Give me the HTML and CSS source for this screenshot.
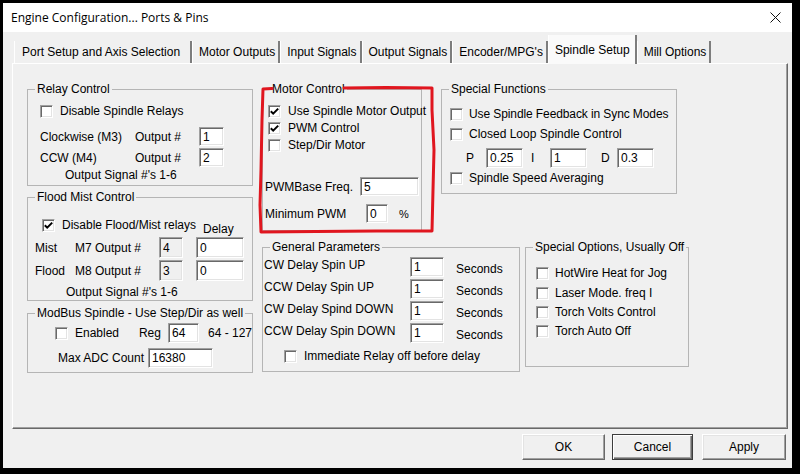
FILE: index.html
```html
<!DOCTYPE html>
<html>
<head>
<meta charset="utf-8">
<title>Engine Configuration</title>
<link rel="stylesheet" href="styles.css">
</head>
<body>
<div class="window">
  <div class="titlebar">
    <span class="title">Engine Configuration... Ports &amp; Pins</span>
    <svg class="close" width="11" height="11" viewBox="0 0 11 11"><path d="M0.5 0.5 L10.5 10.5 M10.5 0.5 L0.5 10.5" stroke="#111" stroke-width="1"/></svg>
  </div>
  <div class="tabs">
    <div class="tab first">Port Setup and Axis Selection</div>
    <div class="tab">Motor Outputs</div>
    <div class="tab">Input Signals</div>
    <div class="tab">Output Signals</div>
    <div class="tab">Encoder/MPG's</div>
    <div class="tab active">Spindle Setup</div>
    <div class="tab">Mill Options</div>
  </div>
  <div class="panel">
    <div class="col-left">
      <fieldset class="gb relay">
        <legend>Relay Control</legend>
        <div class="chk relay-cb"><span class="cb"></span><span>Disable Spindle Relays</span></div>
        <div class="frow relay-row first-out"><span class="lbl w95">Clockwise (M3)</span><span class="lbl w64">Output #</span><span class="edit w25">1</span></div>
        <div class="frow relay-row second-out"><span class="lbl w95">CCW (M4)</span><span class="lbl w64">Output #</span><span class="edit w25">2</span></div>
        <div class="note relay-note">Output Signal #'s 1-6</div>
      </fieldset>
      <fieldset class="gb flood">
        <legend>Flood Mist Control</legend>
        <div class="flood-top">
          <div class="chk flood-cb"><span class="cb"><svg viewBox="0 0 11 11" width="11" height="11"><path d="M1.8 5.2 L4.2 7.6 L9.2 2.6" fill="none" stroke="#000" stroke-width="2"/></svg></span><span>Disable Flood/Mist relays</span></div>
          <span class="delay">Delay</span>
        </div>
        <div class="frow flood-row mist"><span class="lbl w40">Mist</span><span class="lbl w84">M7 Output #</span><span class="edit dis w24 h21">4</span><span class="edit w48 h21 gap13">0</span></div>
        <div class="frow flood-row floodr"><span class="lbl w40">Flood</span><span class="lbl w84">M8 Output #</span><span class="edit dis w24 h21">3</span><span class="edit w48 h21 gap13">0</span></div>
        <div class="note flood-note">Output Signal #'s 1-6</div>
      </fieldset>
      <fieldset class="gb modbus">
        <legend>ModBus Spindle - Use Step/Dir as well</legend>
        <div class="frow modbus-row1"><div class="chk w86"><span class="cb"></span><span>Enabled</span></div><span class="lbl w29">Reg</span><span class="edit w31 h20">64</span><span class="lbl range">64 - 127</span></div>
        <div class="frow modbus-row2"><span class="lbl w90">Max ADC Count</span><span class="edit w65 h20">16380</span></div>
      </fieldset>
    </div>
    <div class="col-right">
      <div class="row-top">
        <div class="motor-wrap">
          <fieldset class="gb motor">
            <legend>Motor Control</legend>
            <div class="chk motor-cb first"><span class="cb"><svg viewBox="0 0 11 11" width="11" height="11"><path d="M1.8 5.2 L4.2 7.6 L9.2 2.6" fill="none" stroke="#000" stroke-width="2"/></svg></span><span>Use Spindle Motor Output</span></div>
            <div class="chk motor-cb"><span class="cb"><svg viewBox="0 0 11 11" width="11" height="11"><path d="M1.8 5.2 L4.2 7.6 L9.2 2.6" fill="none" stroke="#000" stroke-width="2"/></svg></span><span>PWM Control</span></div>
            <div class="chk motor-cb"><span class="cb"></span><span>Step/Dir Motor</span></div>
            <div class="frow pwm-row"><span class="lbl w95">PWMBase Freq.</span><span class="edit w59">5</span></div>
            <div class="frow minpwm-row"><span class="lbl w101">Minimum PWM</span><span class="edit w22">0</span><span class="lbl pct">%</span></div>
          </fieldset>
          <svg class="annot" width="184" height="158" viewBox="0 0 184 158"><path d="M16 8.5 L7 9 L6 40 L5 90 L4 125 L5 152 L60 151.5 L120 151 L176 151 L177 110 L178 70 L176 30 L176 8 L130 7.5 L88 8" fill="none" stroke="#e0161f" stroke-width="3" stroke-linejoin="round" stroke-linecap="round"/></svg>
        </div>
        <fieldset class="gb special">
          <legend>Special Functions</legend>
          <div class="chk sf-cb first"><span class="cb"></span><span>Use Spindle Feedback in Sync Modes</span></div>
          <div class="chk sf-cb second"><span class="cb"></span><span>Closed Loop Spindle Control</span></div>
          <div class="frow pid-row"><span class="lbl w20">P</span><span class="edit w37 h20">0.25</span><span class="lbl w19 ml8">I</span><span class="edit w37 h20">1</span><span class="lbl w16 ml14">D</span><span class="edit w37 h20">0.3</span></div>
          <div class="chk sf-cb third"><span class="cb"></span><span>Spindle Speed Averaging</span></div>
        </fieldset>
      </div>
      <div class="row-bottom">
        <fieldset class="gb general">
          <legend>General Parameters</legend>
          <div class="frow gp-row first"><span class="lbl gp-lbl">CW Delay Spin UP</span><span class="edit w34 h20">1</span><span class="lbl secs">Seconds</span></div>
          <div class="frow gp-row"><span class="lbl gp-lbl">CCW Delay Spin UP</span><span class="edit w34 h20">1</span><span class="lbl secs">Seconds</span></div>
          <div class="frow gp-row"><span class="lbl gp-lbl">CW Delay Spind DOWN</span><span class="edit w34 h20">1</span><span class="lbl secs">Seconds</span></div>
          <div class="frow gp-row"><span class="lbl gp-lbl">CCW Delay Spin DOWN</span><span class="edit w34 h20">1</span><span class="lbl secs">Seconds</span></div>
          <div class="chk gp-cb"><span class="cb"></span><span>Immediate Relay off before delay</span></div>
        </fieldset>
        <fieldset class="gb options">
          <legend>Special Options, Usually Off</legend>
          <div class="chk so-cb o1"><span class="cb"></span><span>HotWire Heat for Jog</span></div>
          <div class="chk so-cb o2"><span class="cb"></span><span>Laser Mode. freq I</span></div>
          <div class="chk so-cb o3"><span class="cb"></span><span>Torch Volts Control</span></div>
          <div class="chk so-cb o4"><span class="cb"></span><span>Torch Auto Off</span></div>
        </fieldset>
      </div>
    </div>
  </div>
  <div class="buttons">
    <div class="btn ok">OK</div>
    <div class="btn cancel">Cancel</div>
    <div class="btn apply">Apply</div>
  </div>
</div>
</body>
</html>
```
FILE: styles.css
```css
* { box-sizing: border-box; }
html, body { margin: 0; padding: 0; }
body {
  background: #000;
  width: 800px;
  height: 474px;
  overflow: hidden;
  font-family: "Liberation Sans", Arial, sans-serif;
  font-size: 12px;
  color: #000;
}
.window {
  margin: 3px 8px 0 3px;
  width: 789px;
  height: 465px;
  background: #f0f0f0;
  display: flex;
  flex-direction: column;
}
.titlebar {
  height: 29px;
  flex: none;
  background: #fff;
  display: flex;
  align-items: center;
  justify-content: space-between;
  padding: 0 11px 0 8px;
}
.title { font-family: "Open Sans", sans-serif; font-size: 12px; }
.close { display: block; }

/* tabs */
.tabs {
  height: 31px;
  flex: none;
  display: flex;
  align-items: flex-end;
  padding-left: 11px;
  position: relative;
  z-index: 1;
}
.tab {
  height: 22px;
  line-height: 22px;
  padding: 0 3px 0 6px;
  border-left: 1px solid #fff;
  border-right: 2px solid #7d7d7d;
  white-space: nowrap;
}
.tab.first { padding: 0 10px 0 7px; }
.tab.active {
  height: 29px;
  margin-bottom: -1px;
  line-height: 20px;
  padding: 5px 5px 0 6px;
  background: #fafafa;
}

/* panel */
.panel {
  flex: none;
  margin-left: 9px;
  width: 776px;
  height: 366px;
  border: 1px solid;
  border-color: #fff #696969 #696969 #fff;
  box-shadow: inset -1px -1px 0 #a0a0a0;
  display: flex;
  gap: 9px;
  padding: 18px 0 0 14px;
}
.col-left { width: 226px; display: flex; flex-direction: column; }
.col-right { display: flex; flex-direction: column; }
.row-top { display: flex; align-items: flex-start; gap: 19px; }
.row-bottom { display: flex; align-items: flex-start; gap: 5px; margin-top: 9px; }

/* group boxes */
.gb {
  margin: 0;
  padding: 0;
  min-width: 0;
  border: 1px solid #b5b5b5;
  display: block;
}
.gb legend {
  margin-left: 7px;
  padding: 0 2px;
  line-height: 14px;
  height: 14px;
  white-space: nowrap;
}
.relay { height: 104px; }
.flood { height: 111px; margin-top: 4px; }
.modbus { height: 67px; margin-top: 5px; }
.motor { width: 160px; height: 149px; }
.special { width: 236px; height: 112px; }
.general { width: 258px; height: 132px; }
.options { width: 164px; height: 127px; }

/* controls */
.chk {
  display: flex;
  align-items: center;
  gap: 7px;
  height: 14px;
  white-space: nowrap;
}
.cb {
  flex: none;
  width: 13px;
  height: 13px;
  background: #fff;
  border: 1px solid;
  border-color: #a0a0a0 #fff #fff #a0a0a0;
  box-shadow: inset 1px 1px 0 #696969, inset -1px -1px 0 #e3e3e3;
}
.cb svg { display: block; }
.frow { display: flex; align-items: center; white-space: nowrap; }
.lbl { flex: none; line-height: 14px; }
.edit {
  flex: none;
  display: block;
  height: 19px;
  background: #fff;
  border: 1px solid;
  border-color: #a0a0a0 #fff #fff #a0a0a0;
  box-shadow: inset 1px 1px 0 #696969, inset -1px -1px 0 #e3e3e3;
  padding-left: 3px;
  line-height: 18px;
  white-space: nowrap;
  overflow: hidden;
}
.edit.dis { background: #f0f0f0; }
.h20 { height: 20px; }
.h21 { height: 21px; line-height: 20px; }
.w16 { width: 16px; } .w19 { width: 19px; } .w20 { width: 20px; }
.w22 { width: 22px; } .w24 { width: 24px; } .w25 { width: 25px; }
.w29 { width: 29px; } .w31 { width: 31px; } .w34 { width: 34px; }
.w37 { width: 37px; } .w40 { width: 40px; } .w48 { width: 48px; }
.w59 { width: 59px; } .w64 { width: 64px; } .w65 { width: 65px; }
.w84 { width: 84px; } .w86 { width: 86px; } .w90 { width: 90px; }
.w95 { width: 95px; } .w101 { width: 101px; }
.ml8 { margin-left: 8px; } .ml14 { margin-left: 14px; }
.gap13 { margin-left: 13px; }
.note { line-height: 14px; }

/* relay */
.relay-cb { margin: 8px 0 0 12px; }
.relay-row { height: 19px; padding-left: 12px; }
.first-out { margin-top: 9px; }
.second-out { margin-top: 2px; }
.relay-note { margin-top: 1px; padding-left: 37px; }

/* flood */
.flood-top { display: flex; align-items: flex-start; height: 20px; margin-top: 13px; padding-left: 14px; }
.flood-cb { width: 161px; margin-top: 1px; }
.delay { margin-top: 5px; line-height: 14px; }
.flood-row { height: 21px; padding-left: 7px; }
.floodr { margin-top: 2px; }
.flood-note { margin-top: 4px; padding-left: 38px; }

/* modbus */
.modbus-row1 { height: 20px; margin-top: 3px; padding-left: 27px; }
.range { margin-left: 9px; }
.modbus-row2 { height: 20px; margin-top: 5px; padding-left: 30px; }

/* motor */
.motor-wrap { position: relative; width: 160px; }
.annot { position: absolute; left: -6px; top: -2px; pointer-events: none; }
.motor-cb { margin: 3px 0 0 5px; }
.motor-cb.first { margin-top: 8px; }
.pwm-row { height: 19px; margin-top: 25px; padding-left: 2px; }
.minpwm-row { height: 19px; margin-top: 8px; padding-left: 2px; }
.pct { margin-left: 11px; font-size: 11px; }

/* special functions */
.sf-cb { margin-left: 8px; gap: 6px; }
.sf-cb.first { margin-top: 11px; letter-spacing: -0.1px; }
.sf-cb.second { margin-top: 6px; }
.sf-cb.third { margin-top: 3px; }
.pid-row { height: 20px; margin-top: 7px; padding-left: 24px; }

/* general */
.gp-row { height: 20px; margin-top: 2px; padding-left: 1px; }
.gp-row.first { margin-top: 3px; }
.gp-lbl { width: 146px; align-self: flex-start; margin-top: 1px; }
.secs { margin-left: 12px; margin-top: 3px; }
.gp-cb { margin: 6px 0 0 21px; }

/* special options */
.so-cb { margin-left: 10px; gap: 6px; }
.o1 { margin-top: 12px; }
.o2 { margin-top: 6px; }
.o3 { margin-top: 5px; }
.o4 { margin-top: 5px; }

/* buttons */
.buttons {
  flex: 1;
  display: flex;
  justify-content: flex-end;
  align-items: flex-start;
  padding: 5px 6px 0 0;
}
.btn {
  height: 26px;
  line-height: 24px;
  text-align: center;
  background: #f0f0f0;
  border: 1px solid;
  border-color: #fff #696969 #696969 #fff;
  box-shadow: inset -1px -1px 0 #a0a0a0, inset 1px 1px 0 #e3e3e3;
}
.ok { width: 83px; }
.cancel {
  width: 81px;
  margin-left: 7px;
  border-color: #3c3c3c;
  box-shadow: inset 1px 1px 0 #fff, inset -1px -1px 0 #696969, inset -2px -2px 0 #a0a0a0;
}
.apply { width: 84px; margin-left: 9px; }
```
